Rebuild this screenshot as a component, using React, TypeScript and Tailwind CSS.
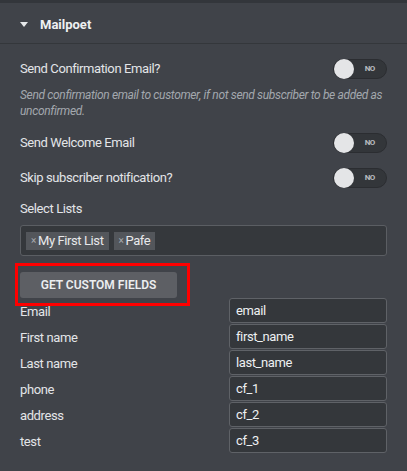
import React from "react";

function Toggle() {
  return (
    <div className="relative w-[54px] h-[20px] rounded-full bg-[#33363a] border border-[#2b2d31] flex items-center">
      <div className="absolute left-0 top-[-1px] w-[20px] h-[20px] rounded-full bg-[#e4e5e7]" />
      <span className="ml-auto mr-[11px] text-[8px] font-bold leading-none text-[#b9bcc0]">NO</span>
    </div>
  );
}

function Tag({ label }: { label: string }) {
  return (
    <div className="h-[18px] flex items-center bg-[#53565b] pl-[5px] pr-[5px] gap-[2px]">
      <span className="text-[10px] text-[#a6a9ad] leading-none">×</span>
      <span className="text-[13px] leading-none tracking-[-0.4px] text-[#e8e9eb]">{label}</span>
    </div>
  );
}

const fields: [string, string][] = [
  ["Email", "email"],
  ["First name", "first_name"],
  ["Last name", "last_name"],
  ["phone", "cf_1"],
  ["address", "cf_2"],
  ["test", "cf_3"],
];

export default function App() {
  return (
    <div className="relative w-[407px] h-[471px] bg-[#404349] font-['Roboto',sans-serif] text-[#e3e5e8] overflow-hidden">
      <div className="h-[3px] bg-[#33363b]" />
      <div className="h-[41px] flex items-center border-b border-[#34373b] pl-[20px] pt-[3px]">
        <svg width="8" height="5" viewBox="0 0 8 5" className="mr-[12px]">
          <path d="M0 0 L8 0 L4 5 Z" fill="#e6e8ea" />
        </svg>
        <span className="text-[13px] font-bold text-[#eef0f2]">Mailpoet</span>
      </div>
      <div className="px-[20px] tracking-[-0.4px]">
        <div className="mt-[15px] flex items-center justify-between">
          <span className="text-[13px]">Send Confirmation Email?</span>
          <Toggle />
        </div>
        <p className="mt-[8px] text-[12px] leading-[16px] italic text-[#a3a8ae] tracking-[-0.35px]">
          Send confirmation email to customer, if not send subscriber to be added as unconfirmed.
        </p>
        <div className="mt-[14px] flex items-center justify-between">
          <span className="text-[13px]">Send Welcome Email</span>
          <Toggle />
        </div>
        <div className="mt-[15px] flex items-center justify-between">
          <span className="text-[13px]">Skip subscriber notification?</span>
          <Toggle />
        </div>
        <div className="mt-[13px] text-[13px] leading-[16px]">Select Lists</div>
        <div className="mt-[8px] h-[31px] rounded-[3px] border border-[#5b5e63] bg-[#35383c] flex items-center gap-[5px] pl-[5px]">
          <Tag label="My First List" />
          <Tag label="Pafe" />
        </div>
        <button className="mt-[16px] w-[157px] h-[26px] rounded-[3px] bg-[#5d5f64] text-[12px] font-semibold text-[#eceef0] tracking-[0px]">
          GET CUSTOM FIELDS
        </button>
        <div className="flex flex-col gap-[1px]">
          {fields.map(([l, v]) => (
            <div key={l} className="flex items-center justify-between h-[25px]">
              <span className="text-[13px] pt-[2px]">{l}</span>
              <div className="w-[158px] h-[25px] rounded-[3px] border border-[#5f6267] bg-[#34373b] flex items-center pl-[6px] text-[13px] text-[#eef0f2]">
                {v}
              </div>
            </div>
          ))}
        </div>
      </div>
      <div className="absolute left-[15px] top-[263px] w-[175px] h-[43px] border-[3px] border-[#ff0000] pointer-events-none" />
    </div>
  );
}
